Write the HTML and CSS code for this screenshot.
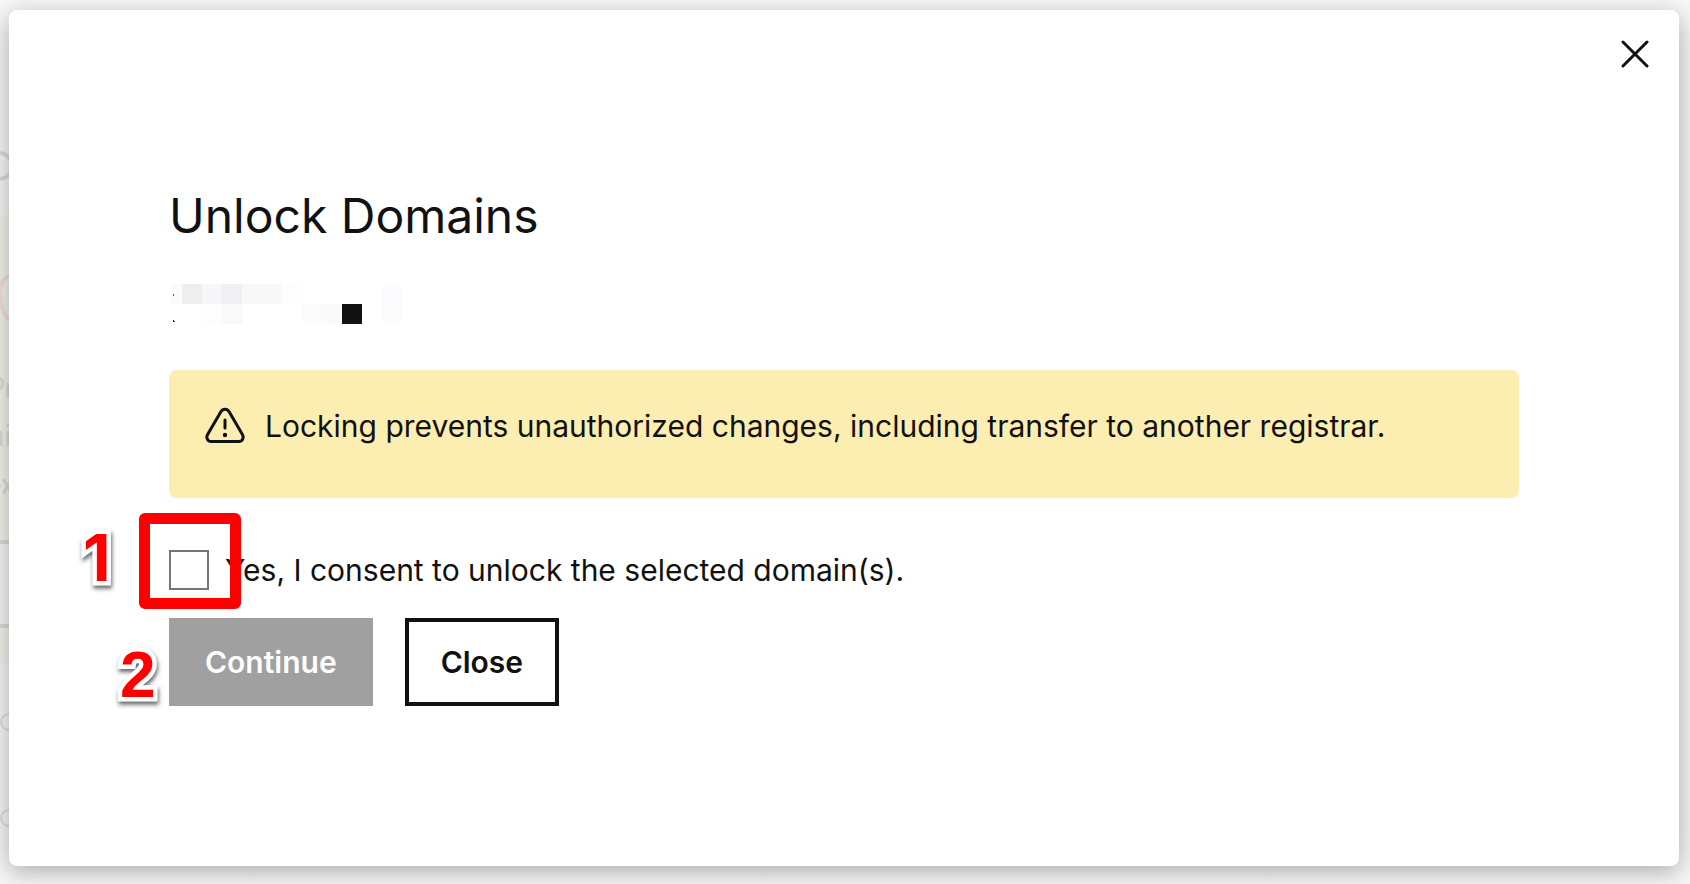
FILE: index.html
```
<!DOCTYPE html>
<html lang="en">
<head>
    <meta charset="UTF-8">
    <meta name="viewport" content="width=device-width, initial-scale=1.0">
    <title>Unlock Domains</title>
    <link rel="stylesheet" href="styles.css">
</head>
<body>

    <!-- page behind the dialog, only its left edge shows -->
    <div class="backdrop" aria-hidden="true">
        <svg class="backdrop-edge" width="12" height="884" viewBox="0 0 12 884" fill="none">
            <rect y="215" width="12" height="449" fill="#f1f0ea"/>
            <rect y="542" width="12" height="84" fill="#f3f3f3"/>
            <path d="M0 542H12M0 626H12" stroke="#d9d9d9" stroke-width="4"/>
            <path d="M-6 153H-2C7 153 12 159 12 166S7 179 -2 179H-6" stroke="#d9d9d9" stroke-width="4"/>
            <path d="M12 276C3 277 0 283 0 293C0 307 4 316 12 322" stroke="#f1dcda" stroke-width="4"/>
            <path d="M-2 378C4 378 4 389 -2 389M8 398V383" stroke="#d9d9d6" stroke-width="3"/>
            <path d="M-2 431C1 431 1 434 1 446M8 446V431M8 424V427" stroke="#d9d9d6" stroke-width="3"/>
            <path d="M-2 486H1M3 479L12 494M3 494L12 479" stroke="#d9d9d6" stroke-width="3"/>
            <circle cx="9" cy="722" r="8" stroke="#d9d9d9" stroke-width="2"/>
            <circle cx="9" cy="818" r="8" stroke="#d9d9d9" stroke-width="2"/>
        </svg>
    </div>

    <div class="modal" role="dialog" aria-labelledby="modal-title">
        <button class="modal-x" type="button" aria-label="Close dialog">
            <svg width="28" height="28" viewBox="0 0 28 28" fill="none" stroke="#111" stroke-width="3" stroke-linecap="round">
                <path d="M2 2L26 26M26 2L2 26"/>
            </svg>
        </button>

        <h1 id="modal-title">Unlock Domains</h1>

        <!-- pixelated domain name -->
        <svg class="domain" width="220" height="40" viewBox="0 0 220 40" role="img" aria-label="Hidden domain name">
            <path d="M3 0H13V20H1Z" fill="#fbfbfb"/>
            <rect x="13" width="20" height="20" fill="#eeeeee"/>
            <rect x="33" width="20" height="20" fill="#f7f7f9"/>
            <rect x="53" width="20" height="20" fill="#f0f0f3"/>
            <rect x="73" width="40" height="20" fill="#f8f8f8"/>
            <rect x="113" width="20" height="20" fill="#fdfdfd"/>
            <rect x="213" y="1" width="20" height="19" fill="#fbfbfe"/>
            <rect x="33" y="20" width="20" height="20" fill="#fdfdfd"/>
            <rect x="53" y="20" width="20" height="20" fill="#f9f9f9"/>
            <rect x="133" y="20" width="20" height="20" fill="#fcfcfc"/>
            <rect x="153" y="20" width="20" height="20" fill="#fafafa"/>
            <rect x="173" y="20" width="20" height="20" fill="#121214"/>
            <rect x="213" y="20" width="20" height="20" fill="#fcfcfc"/>
            <rect x="4" y="10" width="1" height="2" fill="#555"/>
            <path d="M4 36H5V37H6V38H4Z" fill="#333"/>
        </svg>

        <div class="alert">
            <svg class="alert-icon" width="40" height="40" viewBox="0 0 40 40" fill="none" stroke="#111" stroke-width="3" stroke-linecap="round">
                <path d="M16 5.500L2.600 28.500C.8 31.500 2.600 35.500 6 35.500H34C37.400 35.500 39.200 31.500 37.400 28.500L24 5.500C22.200 2.400 17.800 2.400 16 5.500Z"/>
                <path d="M20 14V22"/>
                <circle cx="20" cy="29" r="2.200" fill="#111" stroke="none"/>
            </svg>
            <p>Locking prevents unauthorized changes, including transfer to another registrar.</p>
        </div>

        <div class="steps">
            <div class="consent">
                <input type="checkbox" id="consent">
                <label for="consent">Yes, I consent to unlock the selected domain(s).</label>
                <span class="highlight"></span>
                <span class="marker marker-one">1</span>
            </div>
            <div class="buttons">
                <button class="btn btn-continue" type="button" disabled>Continue</button>
                <button class="btn btn-close" type="button">Close</button>
                <span class="marker marker-two">2</span>
            </div>
        </div>
    </div>

</body>
</html>
```
FILE: styles.css
```
* {
    box-sizing: border-box;
}
body {
    margin: 0;
    min-height: 100vh;
    display: flex;
    padding: 10px 11px 18px 9px;
    background: #f7f7f7;
    color: #111;
    font-family: Inter, "Liberation Sans", sans-serif;
    font-size: 30px;
    line-height: 40px;
}
.backdrop {
    position: absolute;
    top: 31px;
    right: 0;
    bottom: 0;
    left: 0;
    background: linear-gradient(#f4f4f4 800px, #f7f7f7 850px);
    overflow: hidden;
}
.backdrop-edge {
    display: block;
    margin-top: -31px;
}
.modal {
    position: relative;
    flex: 1;
    padding: 176px 160px 0;
    background: #fff;
    border-radius: 8px;
    box-shadow: 0 6px 24px rgba(0, 0, 0, 0.3);
}
.modal-x {
    position: absolute;
    top: 30px;
    right: 30px;
    display: flex;
    padding: 0;
    border: none;
    background: none;
    cursor: pointer;
}
h1 {
    margin: 0 0 38px;
    font-size: 48px;
    line-height: 60px;
    font-weight: 400;
}
.domain {
    display: block;
    overflow: visible;
    margin-bottom: 46px;
}
.alert {
    display: flex;
    gap: 20px;
    min-height: 128px;
    padding: 36px;
    margin-bottom: 52px;
    background: #fcedb0;
    border-radius: 8px;
}
.alert-icon {
    flex: none;
}
.alert p {
    margin: 0;
}
.consent {
    position: relative;
    display: flex;
    align-items: center;
    gap: 16px;
    margin-bottom: 28px;
}
.consent input {
    appearance: none;
    width: 40px;
    height: 40px;
    margin: 0;
    border: 2px solid #767676;
    background: #fff;
}
.buttons {
    position: relative;
    display: flex;
    gap: 32px;
}
.btn {
    height: 88px;
    padding: 0 32px;
    border: 4px solid #111;
    background: #fff;
    color: #111;
    font: inherit;
    font-weight: 600;
    cursor: pointer;
}
.btn-continue {
    border-color: #a0a0a0;
    background: #a0a0a0;
    color: #fff;
    cursor: default;
}

/* red annotations */
.highlight {
    position: absolute;
    top: -37px;
    left: -30px;
    width: 102px;
    height: 96px;
    border: 11px solid #f00;
    border-radius: 6px;
    pointer-events: none;
}
.marker {
    position: absolute;
    color: #f00;
    font-family: "Liberation Sans", Arial, sans-serif;
    font-size: 64px;
    line-height: 64px;
    font-weight: 700;
    -webkit-text-stroke: 9px #fff;
    paint-order: stroke fill;
    filter: drop-shadow(1px 3px 2px rgba(0, 0, 0, 0.6));
}
.marker-one {
    top: -24px;
    left: -86px;
    font-family: Inter, Arial, sans-serif;
}
.marker-two {
    top: 25px;
    left: -49px;
}
```
